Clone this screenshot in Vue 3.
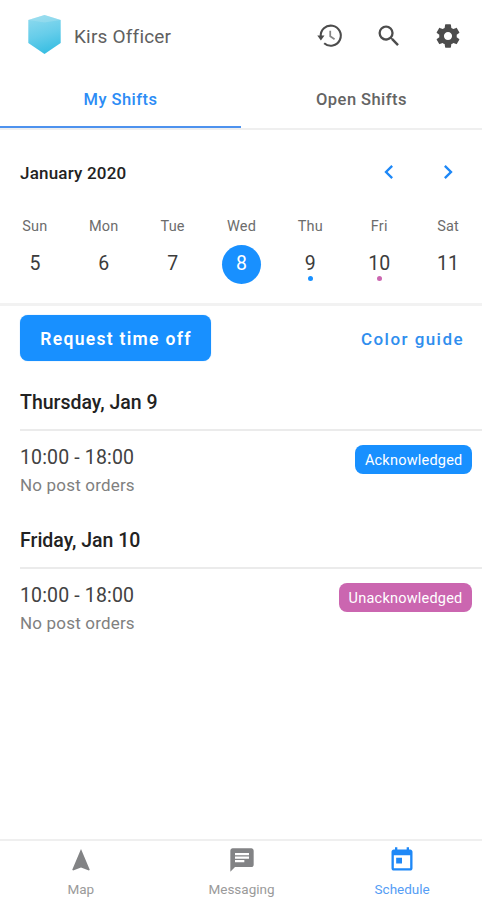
<template>
  <div class="app">
    <header class="header">
      <div class="brand">
        <svg class="logo" viewBox="0 0 33 39">
          <defs>
            <linearGradient id="shield" x1="0.35" y1="0" x2="0.6" y2="1">
              <stop offset="0" stop-color="#8cd9ee" />
              <stop offset="0.5" stop-color="#66cdea" />
              <stop offset="1" stop-color="#35bde2" />
            </linearGradient>
          </defs>
          <path d="M16.5 0 32.7 5V28L16.5 39 .3 28V5Z" fill="url(#shield)" />
          <path d="M.3 5 16.5 7.5 32.7 5 16.5 0Z" fill="#b4e4f0" opacity="0.35" />
        </svg>
        <h1 class="title">Kirs Officer</h1>
      </div>
      <div class="header-icons">
        <button class="icon-btn" aria-label="History">
          <svg viewBox="0 0 24 24">
            <path class="ring" d="M4.1 12.6A8.6 8.6 0 1 1 7 18.2" />
            <path d="M1.1 11.6H7.3L4.2 15.8z" />
            <path class="hands" d="M12.2 7.6V12.2L15.9 14.7" />
          </svg>
        </button>
        <button v-for="icon in headerIcons" :key="icon.name" class="icon-btn" :aria-label="icon.name">
          <svg viewBox="0 0 24 24"><path :d="icon.path" /></svg>
        </button>
      </div>
    </header>

    <nav class="tabs">
      <button
        v-for="tab in tabs"
        :key="tab"
        class="tab"
        :class="{ active: tab === activeTab }"
        @click="activeTab = tab"
      >{{ tab }}</button>
    </nav>

    <section class="calendar">
      <div class="month-row">
        <h2 class="month">January 2020</h2>
        <div class="arrows">
          <button class="icon-btn" aria-label="Previous">
            <svg viewBox="0 0 24 24"><path d="M15.41 7.41 14 6l-6 6 6 6 1.41-1.41L10.83 12z" /></svg>
          </button>
          <button class="icon-btn" aria-label="Next">
            <svg viewBox="0 0 24 24"><path d="M10 6 8.59 7.41 13.17 12l-4.58 4.59L10 18l6-6z" /></svg>
          </button>
        </div>
      </div>
      <div class="week">
        <div v-for="day in days" :key="day.date" class="day" @click="selected = day.date">
          <span class="day-name">{{ day.name }}</span>
          <span class="day-number" :class="{ selected: day.date === selected }">
            {{ day.date }}
            <i v-if="day.status" class="dot" :class="day.status"></i>
          </span>
        </div>
      </div>
    </section>

    <main class="content">
      <div class="actions">
        <button class="btn">Request time off</button>
        <button class="link">Color guide</button>
      </div>

      <section v-for="shift in shifts" :key="shift.day" class="shift">
        <h3 class="shift-day">{{ shift.day }}</h3>
        <div class="shift-row">
          <div>
            <p class="time">{{ shift.time }}</p>
            <p class="orders">No post orders</p>
          </div>
          <span class="badge" :class="shift.status">{{ shift.label }}</span>
        </div>
      </section>
    </main>

    <nav class="bottom-nav">
      <a v-for="item in navItems" :key="item.label" class="nav-item" :class="{ active: item.active }">
        <svg viewBox="0 0 24 24"><path :d="item.path" /></svg>
        <span>{{ item.label }}</span>
      </a>
    </nav>
  </div>
</template>

<script setup>
import { ref } from 'vue'

const tabs = ['My Shifts', 'Open Shifts']
const activeTab = ref('My Shifts')
const selected = ref(8)

const headerIcons = [
  {
    name: 'Search',
    path: 'M15.5 14h-.79l-.28-.27A6.471 6.471 0 0 0 16 9.5 6.5 6.5 0 1 0 9.5 16c1.61 0 3.09-.59 4.23-1.57l.27.28v.79l5 4.99L20.49 19l-4.99-5zm-6 0C7.01 14 5 11.99 5 9.5S7.01 5 9.5 5 14 7.01 14 9.5 11.99 14 9.5 14z'
  },
  {
    name: 'Settings',
    path: 'M19.43 12.98c.04-.32.07-.64.07-.98s-.03-.66-.07-.98l2.11-1.65c.19-.15.24-.42.12-.64l-2-3.46c-.12-.22-.39-.3-.61-.22l-2.49 1c-.52-.4-1.08-.73-1.69-.98l-.38-2.65A.488.488 0 0 0 14 2h-4c-.25 0-.46.18-.49.42l-.38 2.65c-.61.25-1.17.59-1.69.98l-2.49-1c-.23-.09-.49 0-.61.22l-2 3.46c-.13.22-.07.49.12.64l2.11 1.65c-.04.32-.07.65-.07.98s.03.66.07.98l-2.11 1.65c-.19.15-.24.42-.12.64l2 3.46c.12.22.39.3.61.22l2.49-1c.52.4 1.08.73 1.69.98l.38 2.65c.03.24.24.42.49.42h4c.25 0 .46-.18.49-.42l.38-2.65c.61-.25 1.17-.59 1.69-.98l2.49 1c.23.09.49 0 .61-.22l2-3.46c.12-.22.07-.49-.12-.64l-2.11-1.65zM12 15.5c-1.93 0-3.5-1.57-3.5-3.5s1.57-3.5 3.5-3.5 3.5 1.57 3.5 3.5-1.57 3.5-3.5 3.5z'
  }
]

const days = [
  { name: 'Sun', date: 5 },
  { name: 'Mon', date: 6 },
  { name: 'Tue', date: 7 },
  { name: 'Wed', date: 8 },
  { name: 'Thu', date: 9, status: 'acknowledged' },
  { name: 'Fri', date: 10, status: 'unacknowledged' },
  { name: 'Sat', date: 11 }
]

const shifts = [
  { day: 'Thursday, Jan 9', time: '10:00 - 18:00', status: 'acknowledged', label: 'Acknowledged' },
  { day: 'Friday, Jan 10', time: '10:00 - 18:00', status: 'unacknowledged', label: 'Unacknowledged' }
]

const navItems = [
  { label: 'Map', path: 'M12 2.5 4.5 20.29l.71.71L12 18.4l6.79 2.6.71-.71z' },
  {
    label: 'Messaging',
    path: 'M20 2H4c-1.1 0-1.99.9-1.99 2L2 22l4-4h14c1.1 0 2-.9 2-2V4c0-1.1-.9-2-2-2zM6 9h12v2H6V9zm8 5H6v-2h8v2zm4-6H6V6h12v2z'
  },
  {
    label: 'Schedule',
    active: true,
    path: 'M19 3h-1V1h-2v2H8V1H6v2H5c-1.11 0-1.99.9-1.99 2L3 19c0 1.1.89 2 2 2h14c1.1 0 2-.9 2-2V5c0-1.1-.9-2-2-2zm0 16H5V8h14v11zM7 10h5v5H7z'
  }
]
</script>

<style>
body {
  margin: 0;
  background: #fff;
}
</style>

<style scoped>
.app {
  height: 900px;
  display: flex;
  flex-direction: column;
  font-family: Roboto, sans-serif;
  color: #222;
  background: #fff;
  overflow: hidden;
}

h1,
h2,
h3,
p {
  margin: 0;
}

button {
  font-family: inherit;
  background: none;
  border: none;
  padding: 0;
  cursor: pointer;
}

.header {
  height: 72px;
  box-sizing: border-box;
  padding: 0 20px 3px 28px;
  display: flex;
  justify-content: space-between;
  align-items: center;
}

.brand {
  display: flex;
  align-items: center;
  gap: 13px;
}

.logo {
  width: 33px;
  height: 39px;
}

.title {
  font-size: 19px;
  line-height: 24px;
  font-weight: 400;
  letter-spacing: 0.2px;
  color: #606060;
  padding-top: 4px;
}

.header-icons {
  display: flex;
  gap: 31px;
  padding-top: 2px;
}

.icon-btn {
  width: 28px;
  height: 28px;
  color: #4c4c4c;
}

.icon-btn svg {
  display: block;
  width: 100%;
  height: 100%;
  fill: currentColor;
}

.icon-btn .ring {
  fill: none;
  stroke: currentColor;
  stroke-width: 1.8;
}

.icon-btn .hands {
  fill: none;
  stroke: #858585;
  stroke-width: 1.5;
}

.tabs {
  display: flex;
  height: 58px;
  box-sizing: border-box;
  border-bottom: 2px solid #efefef;
}

.tab {
  flex: 1;
  height: 56px;
  padding-top: 1px;
  font-size: 16.5px;
  font-weight: 500;
  letter-spacing: 0.45px;
  color: #646464;
  border-bottom: 2px solid transparent;
}

.tab.active {
  color: #2c8cf5;
  border-bottom-color: #4d92ee;
}

.calendar {
  height: 176px;
  box-sizing: border-box;
  padding-top: 27px;
  border-bottom: 3px solid #f2f2f2;
}

.month-row {
  display: flex;
  justify-content: space-between;
  align-items: center;
  padding: 0 20px;
  height: 30px;
}

.month {
  padding-top: 2px;
  font-size: 17px;
  font-weight: 500;
  letter-spacing: 0.2px;
}

.arrows {
  display: flex;
  gap: 31px;
}

.arrows .icon-btn {
  color: #1e88f7;
}

.week {
  display: grid;
  grid-template-columns: repeat(7, 1fr);
  padding-top: 30px;
}

.day {
  display: flex;
  flex-direction: column;
  align-items: center;
  padding-left: 1px;
}

.day-name {
  font-size: 14.5px;
  line-height: 20px;
  color: #6c6c6c;
  letter-spacing: 0.2px;
}

.day-number {
  position: relative;
  width: 39px;
  height: 39px;
  margin-top: 8px;
  border-radius: 50%;
  font-size: 19.5px;
  line-height: 38px;
  text-align: center;
  color: #3c3c3c;
}

.day-number.selected {
  background: #1890ff;
  color: #fff;
}

.dot {
  position: absolute;
  bottom: 3px;
  left: 17px;
  width: 5px;
  height: 5px;
  border-radius: 50%;
}

.acknowledged {
  background: #1890ff;
}

.unacknowledged {
  background: #cb66b0;
}

.content {
  flex: 1;
  padding: 9px 0 0 20px;
}

.actions {
  display: flex;
  justify-content: space-between;
  align-items: center;
  padding-right: 18px;
}

.btn {
  width: 191px;
  height: 46px;
  padding: 2px 0 0 1px;
  border-radius: 8px;
  background: #1890ff;
  color: #fff;
  font-size: 17.5px;
  font-weight: 600;
  letter-spacing: 1.3px;
  box-shadow: 0 0 1px rgba(24, 144, 255, 0.6);
}

.link {
  padding-top: 2px;
  color: #2f8eee;
  font-size: 17px;
  font-weight: 500;
  letter-spacing: 1.45px;
}

.shift {
  height: 138px;
}

.shift-day {
  height: 68px;
  line-height: 83px;
  border-bottom: 2px solid #ebebeb;
  font-size: 19.5px;
  font-weight: 500;
}

.shift-row {
  display: flex;
  justify-content: space-between;
  align-items: flex-start;
  padding: 14px 10px 0 0;
}

.time {
  font-size: 19.5px;
  line-height: 26px;
  letter-spacing: 0.15px;
  color: #424242;
}

.orders {
  margin-top: 1px;
  font-size: 17px;
  line-height: 26px;
  letter-spacing: 0.18px;
  color: #808080;
}

.badge {
  height: 29px;
  padding: 0 9.5px;
  border-radius: 8px;
  color: #fff;
  font-size: 14.5px;
  line-height: 31px;
  letter-spacing: 0.22px;
}

.bottom-nav {
  display: flex;
  height: 61px;
  box-sizing: border-box;
  border-top: 2px solid #efefef;
}

.nav-item {
  flex: 1;
  display: flex;
  flex-direction: column;
  align-items: center;
  padding: 5px 0 0 1px;
  font-size: 13.5px;
  line-height: 18px;
  color: #9a9a9a;
}

.nav-item svg {
  width: 28px;
  height: 28px;
  margin-bottom: 6px;
  fill: #828385;
}

.nav-item.active {
  color: #559df5;
}

.nav-item.active svg {
  fill: #1e88f7;
}
</style>
